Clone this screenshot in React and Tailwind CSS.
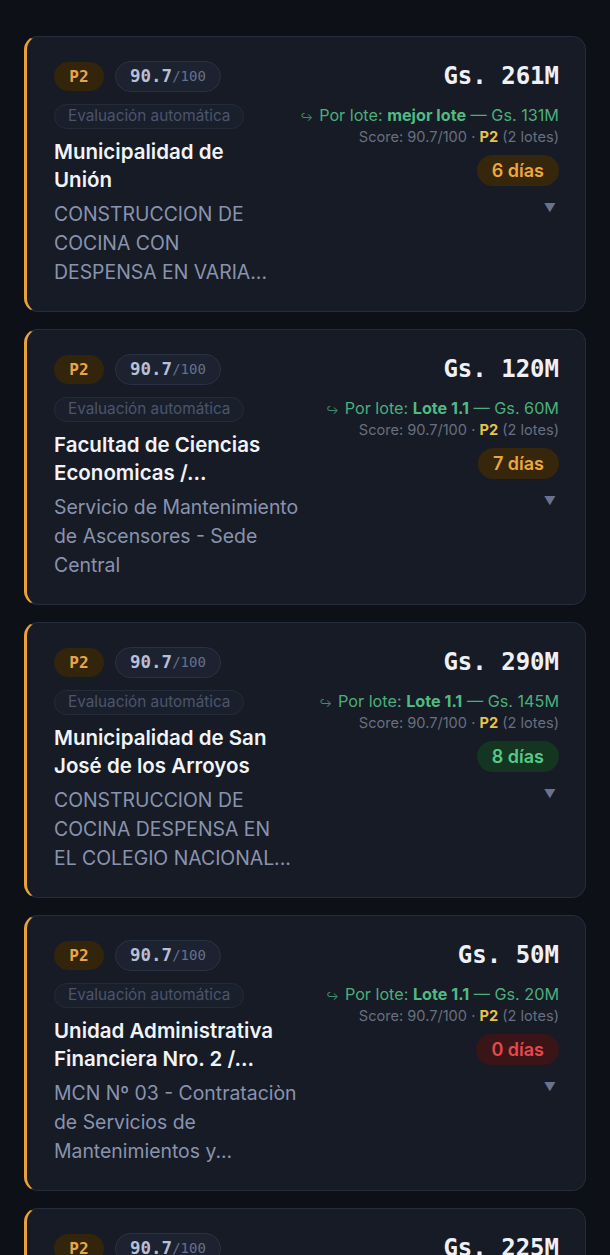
import React from "react";

const cards = [
  {
    amount: "Gs. 261M",
    lote: "mejor lote",
    loteAmount: "Gs. 131M",
    days: "6 días",
    tone: "amber",
    title: "Municipalidad de Unión",
    desc: ["CONSTRUCCION DE", "COCINA CON", "DESPENSA EN VARIA..."],
  },
  {
    amount: "Gs. 120M",
    lote: "Lote 1.1",
    loteAmount: "Gs. 60M",
    days: "7 días",
    tone: "amber",
    title: "Facultad de Ciencias Economicas /...",
    desc: ["Servicio de Mantenimiento", "de Ascensores - Sede", "Central"],
  },
  {
    amount: "Gs. 290M",
    lote: "Lote 1.1",
    loteAmount: "Gs. 145M",
    days: "8 días",
    tone: "green",
    title: "Municipalidad de San José de los Arroyos",
    desc: ["CONSTRUCCION DE", "COCINA DESPENSA EN", "EL COLEGIO NACIONAL..."],
  },
  {
    amount: "Gs. 50M",
    lote: "Lote 1.1",
    loteAmount: "Gs. 20M",
    days: "0 días",
    tone: "red",
    title: "Unidad Administrativa Financiera Nro. 2 /...",
    desc: ["MCN Nº 03 - Contrataciòn", "de Servicios de", "Mantenimientos y..."],
  },
  {
    amount: "Gs. 225M",
    lote: "Lote 1.1",
    loteAmount: "Gs. 112M",
    days: "5 días",
    tone: "amber",
    title: "Municipalidad de Villa Hayes",
    desc: ["CONSTRUCCION DE", "AULAS EN LA", "ESCUELA BASICA..."],
  },
];

const toneClass = {
  amber: "bg-[#36260b] text-[#eda63e]",
  green: "bg-[#14351f] text-[#56c98a]",
  red: "bg-[#3a1517] text-[#e5484d]",
};

const mono = { fontFamily: '"DejaVu Sans Mono", "Liberation Mono", monospace' };

function Card({ c }) {
  return (
    <div className="flex rounded-[14px] border border-[#252c3b] border-l-[3px] border-l-[#e9a23b] bg-[#161b25] pl-[27px] pr-[26px] pt-[24px] pb-[24px]">
      <div className="min-w-0 flex-1">
        <div className="flex h-[31px] items-center gap-[11px]">
          <span
            className="flex h-[29px] w-[50px] items-center justify-center rounded-full bg-[#33250b] text-[16px] font-bold text-[#e9a545]"
            style={mono}
          >
            P2
          </span>
          <span
            className="flex h-[31px] items-center rounded-full border border-[#2a3142] bg-[#1c2230] px-[14px]"
            style={mono}
          >
            <span className="text-[17.5px] font-bold text-[#b7bfd6]">90.7</span>
            <span className="text-[14px] text-[#66708c]">/100</span>
          </span>
        </div>
        <div className="mt-[12px] flex h-[25px] w-fit items-center whitespace-nowrap rounded-full border border-[#242b3a] bg-[#1a1f2c] px-[13px] text-[15.3px] text-[#4c556c]">
          Evaluación automática
        </div>
        <div className="mt-[9px] w-[228px] text-[20.5px] font-semibold leading-[28px] text-[#f1f3f7]">
          {c.title}
        </div>
        <div className="mt-[6px] text-[19.4px] leading-[29px] text-[#8a93ae]">
          {c.desc.map((d, i) => (
            <div key={i} className="h-[29px] whitespace-nowrap">
              {d}
            </div>
          ))}
        </div>
      </div>
      <div className="ml-[8px] flex shrink-0 flex-col items-end text-right">
        <div className="text-[24px] font-bold leading-[30px] text-[#eef0f5]" style={mono}>
          {c.amount}
        </div>
        <div className="mt-[14px] whitespace-nowrap text-[16.2px] leading-[20px] text-[#4dae7c]">
          <span className="mr-[6px] text-[11px] text-[#3f8f6a]">↪</span>
          Por lote: <span className="font-bold text-[#52b983]">{c.lote}</span> — {c.loteAmount}
        </div>
        <div className="whitespace-nowrap text-[14.6px] leading-[20px] text-[#686f80]">
          Score: 90.7/100 · <span className="font-bold text-[#e6c24a]">P2</span> (2 lotes)
        </div>
        <div
          className={`mt-[8px] flex h-[31px] items-center rounded-full px-[15px] text-[18px] font-semibold ${toneClass[c.tone]}`}
        >
          {c.days}
        </div>
        <div className="mt-[14px] mr-[3px] text-[12px] leading-[16px] text-[#6a7290]">▼</div>
      </div>
    </div>
  );
}

export default function App() {
  return (
    <div
      className="h-[1255px] overflow-hidden bg-[#0d1016] px-[24px] pt-[36px]"
      style={{ fontFamily: 'Inter, "Noto Sans", sans-serif' }}
    >
      <div className="flex flex-col gap-[17px]">
        {cards.map((c, i) => (
          <Card key={i} c={c} />
        ))}
      </div>
    </div>
  );
}
